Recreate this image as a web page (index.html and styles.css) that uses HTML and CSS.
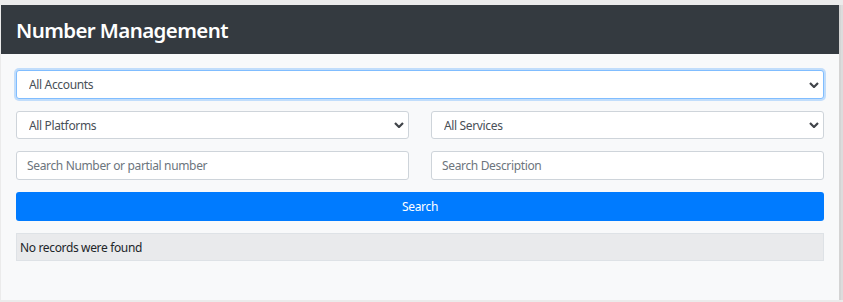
FILE: index.html
```html
<!DOCTYPE html>
<html>
<head>
<meta charset="utf-8">
<link rel="stylesheet" href="styles.css">
</head>
<body>
<div class="card">
  <div class="card-header"><h1 class="title">Number Management</h1></div>
  <div class="card-body">
    <select class="ctl sel focused"><option>All Accounts</option></select>
    <div class="row">
      <select class="ctl sel"><option>All Platforms</option></select>
      <select class="ctl sel"><option>All Services</option></select>
    </div>
    <div class="row">
      <input class="ctl inp" type="text" placeholder="Search Number or partial number">
      <input class="ctl inp" type="text" placeholder="Search Description">
    </div>
    <button class="btn">Search</button>
    <div class="empty">No records were found</div>
  </div>
</div>
</body>
</html>
```
FILE: styles.css
```css
html, body {
  margin: 0;
  padding: 0;
}
body {
  background: #ebebeb;
  padding: 5px 4px 2px 1px;
  font-family: "Noto Sans", "Open Sans", sans-serif;
  width: 843px;
  height: 302px;
  box-sizing: border-box;
}
.card {
  background: #f8f9fa;
  height: 295px;
  box-shadow: 2px 0 0 #d4d4d4, 4px 0 0 #dcdcdc;
}
.card-header {
  background: #343a40;
  height: 49px;
  display: flex;
  align-items: center;
  padding-left: 15px;
}
.title {
  margin: 0;
  color: #fff;
  font-size: 20.5px;
  font-weight: 600;
  letter-spacing: -0.6px;
}
.card-body {
  padding: 16px 15px 0 15px;
  display: flex;
  flex-direction: column;
  gap: 12px;
}
.row {
  display: grid;
  grid-template-columns: 1fr 1fr;
  gap: 22px;
}
.ctl {
  box-sizing: border-box;
  height: 28px;
  width: 100%;
  margin: 0;
  background: #fff;
  border: 1px solid #ced4da;
  border-radius: 3px;
  font-family: inherit;
  font-size: 12px;
  letter-spacing: -0.35px;
  color: #495057;
  padding: 0 30px 0 12px;
  outline: none;
}
.sel {
  appearance: none;
  -webkit-appearance: none;
  background-image: url("data:image/svg+xml,%3Csvg xmlns='http://www.w3.org/2000/svg' width='10' height='6' viewBox='0 0 10 6'%3E%3Cpath d='M1 1l4 4 4-4' fill='none' stroke='%23404449' stroke-width='2.2'/%3E%3C/svg%3E");
  background-repeat: no-repeat;
  background-position: right 4px center;
  background-size: 10px 6px;
}
.focused {
  height: 29px;
  border-color: #80bdff;
  box-shadow: 0 0 0 2px rgba(0, 123, 255, 0.22);
}
.inp {
  height: 29px;
  padding-left: 10px;
}
.inp::placeholder {
  color: #6c757d;
  opacity: 1;
}
.btn {
  height: 29px;
  border: none;
  border-radius: 3px;
  background: #007bff;
  color: #fff;
  font-family: inherit;
  font-size: 12px;
  letter-spacing: -0.3px;
  padding: 0;
}
.empty {
  height: 28px;
  box-sizing: border-box;
  background: #e9eaec;
  border: 1px solid #dee2e6;
  font-size: 12px;
  letter-spacing: -0.35px;
  color: #212529;
  display: flex;
  align-items: center;
  padding-left: 3px;
}
```
